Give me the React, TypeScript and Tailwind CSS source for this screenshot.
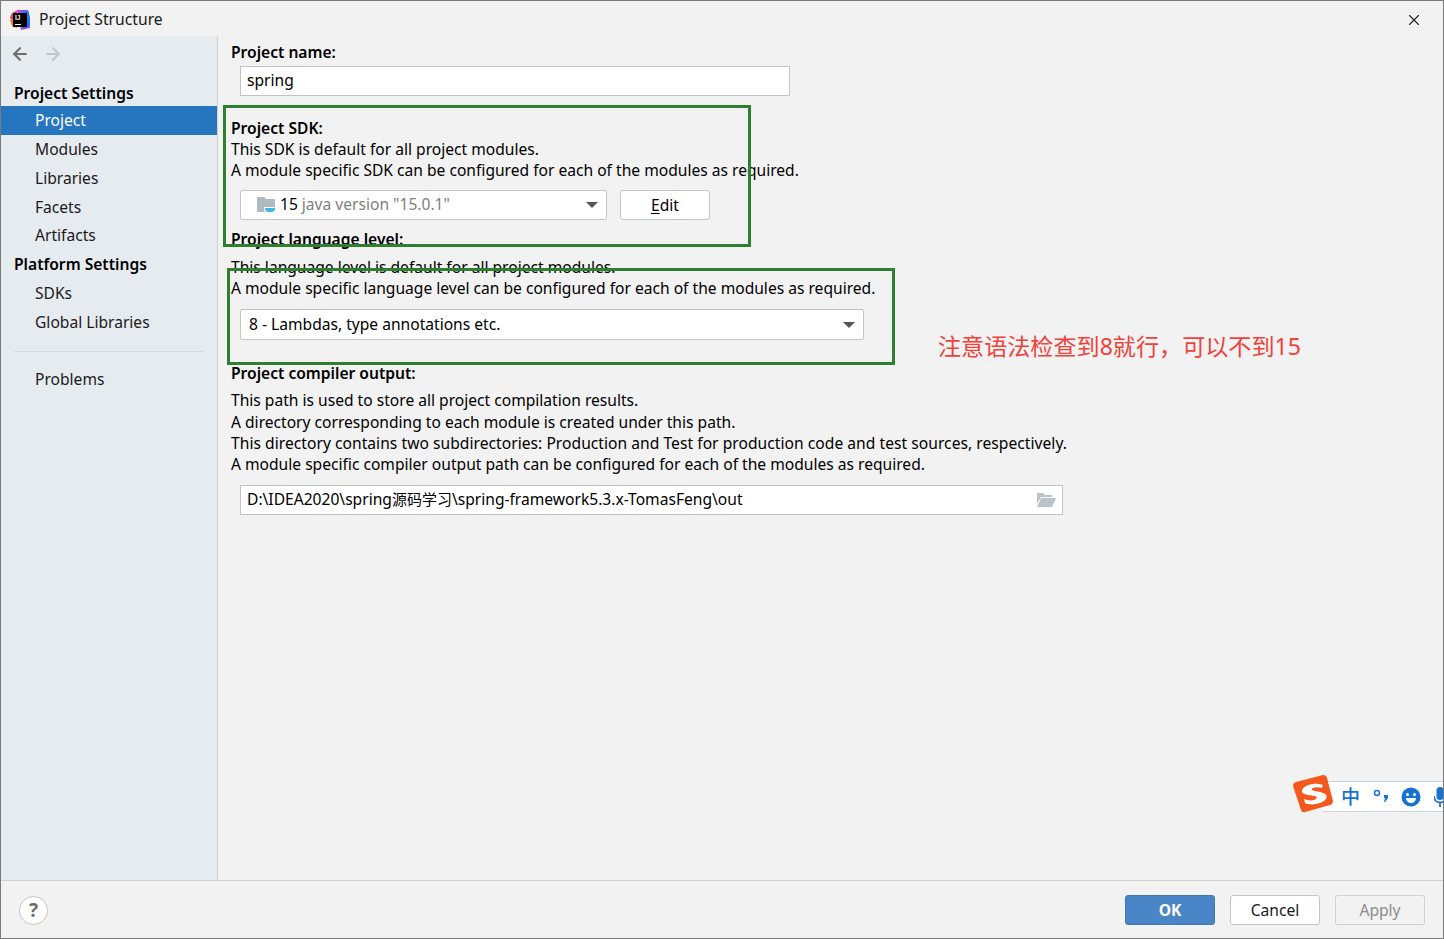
import React from 'react';
import { ArrowLeft, ArrowRight, X } from 'lucide-react';

const font = "font-['Noto_Sans','Noto_Sans_CJK_SC',sans-serif]";

const settingsItems = ['Modules', 'Libraries', 'Facets', 'Artifacts'];

function Caret() {
  return (
    <svg width="12" height="6" viewBox="0 0 12 6" className="shrink-0">
      <path d="M0 0h12L6 6z" fill="#555" />
    </svg>
  );
}

function IdeaLogo() {
  return (
    <svg width="22" height="22" viewBox="0 0 22 22">
      <path d="M3 4 9 1 4 12 1 9z" fill="#fe315d" />
      <path d="M1 11 6 9 8 19 3 17z" fill="#f97a12" />
      <path d="M8 1 19 1 21 9 21 19 12 21z" fill="#b345f1" />
      <path d="M14 1 20 3 21 17 14 20z" fill="#087cfa" />
      <rect x="4" y="4" width="14" height="14" fill="#000" />
      <text x="6" y="11" fontSize="6.5" fontWeight="700" fill="#fff" fontFamily="Liberation Sans">IJ</text>
      <rect x="6" y="15" width="6" height="1" fill="#fff" />
    </svg>
  );
}

function SdkFolder() {
  return (
    <svg width="20" height="20" viewBox="0 0 20 20">
      <path d="M0 2h7l2 2h9v13H0z" fill="#b0bac3" />
      <path d="M7 12h12v2c0 3-2 4-4 4h-4c-2 0-4-1-4-4z" fill="#fff" />
      <path d="M8 13h10v1c0 2-2 3-3.500 3h-3C10 17 8 16 8 14z" fill="#40b6e0" />
    </svg>
  );
}

function OpenFolder() {
  return (
    <svg width="20" height="16" viewBox="0 0 20 16">
      <path d="M1 1h6l2 2h7v2H5L1 12z" fill="#bcc4cb" />
      <path d="M5 6h15l-4 9H1z" fill="#bcc4cb" />
    </svg>
  );
}

function SogouBar() {
  return (
    <div className="absolute left-[1292px] top-[774px] h-[38px] w-[152px]">
      <div className="absolute left-[30px] top-[6px] h-[31px] w-[122px] border-y border-[#c3d3e6] bg-white" />
      <svg width="40" height="38" viewBox="0 0 40 38" className="absolute left-0 top-0">
        <path d="M3 7 30 0q3 0 4 3l6 23q0 3-3 4L12 37q-3 1-4-2L0 11q0-3 3-4z" fill="#f4581c" />
        <path d="M30 10C22 7 11 10 9 15c-1 5 7 5 13 6 3 1 2 3-1 4-4 1-7 0-10-1l1 4c6 3 17 1 21-4 3-5-4-7-11-8-4-1-4-2-2-3 3-1 6-1 9 0z" fill="#fff" />
      </svg>
      <span className="absolute left-[48px] top-[9px] text-[19px] leading-[26px] font-medium text-[#1673d2]">中</span>
      <svg width="20" height="18" viewBox="0 0 20 18" className="absolute left-[80px] top-[12px]">
        <circle cx="4" cy="6" r="2.500" fill="none" stroke="#1673d2" strokeWidth="1.500" />
        <path d="M11 8h4v3l-3 4h-1l1-4h-1z" fill="#1673d2" />
      </svg>
      <svg width="20" height="20" viewBox="0 0 20 20" className="absolute left-[108px] top-[12px]">
        <circle cx="10" cy="10" r="9.500" fill="#1673d2" />
        <circle cx="6.500" cy="7.500" r="1.500" fill="#fff" />
        <circle cx="13.500" cy="7.500" r="1.500" fill="#fff" />
        <path d="M5 11h10c0 3-2.500 5-5 5s-5-2-5-5z" fill="#fff" />
      </svg>
      <svg width="12" height="22" viewBox="0 0 12 22" className="absolute left-[141px] top-[12px]">
        <rect x="2.500" y="0" width="7" height="13" rx="3.500" fill="#1673d2" />
        <path d="M0 9c0 4 2.500 6.500 6 6.500s6-2.500 6-6.500M6 15.500V20" fill="none" stroke="#1673d2" strokeWidth="1.800" />
      </svg>
    </div>
  );
}

export default function App() {
  return (
    <div className={`${font} relative flex h-[939px] w-[1444px] flex-col overflow-hidden border border-[#7a7a7a] bg-[#f2f2f2] text-[15.600px] text-black`}>
      {/* Title bar */}
      <header className="flex h-[35px] shrink-0 items-center bg-[#f2f2f2] pl-[8px] pr-[20px] pt-[2px]">
        <IdeaLogo />
        <span className="ml-[8px] text-[15.700px] text-[#1a1a1a]">Project Structure</span>
        <X size={18} strokeWidth={1.500} className="ml-auto text-[#222]" />
      </header>

      <div className="flex min-h-0 flex-1">
        {/* Sidebar */}
        <aside className="flex w-[217px] shrink-0 flex-col border-r border-[#d1d1d1] bg-[#e6ebf0] leading-[28.800px]">
          <div className="flex h-[36px] items-center gap-[13px] pl-[9px]">
            <ArrowLeft size={20} strokeWidth={2.500} className="text-[#6e6e6e]" />
            <ArrowRight size={20} strokeWidth={2.500} className="text-[#c4c6c8]" />
          </div>
          <div className="mt-[7px] h-[27px] pl-[13px] font-semibold">Project Settings</div>
          <div className="h-[29px] bg-[#2675bf] pl-[34px] text-white">Project</div>
          {settingsItems.map((item) => (
            <div key={item} className="pl-[34px] text-[#1a1a1a]">{item}</div>
          ))}
          <div className="pl-[13px] font-semibold">Platform Settings</div>
          <div className="pl-[34px] text-[#1a1a1a]">SDKs</div>
          <div className="pl-[34px] text-[#1a1a1a]">Global Libraries</div>
          <div className="mx-[13px] mt-[14px] border-t border-[#d5dae0]" />
          <div className="mt-[13px] pl-[34px] text-[#1a1a1a]">Problems</div>
        </aside>

        {/* Main form */}
        <main className="min-w-0 flex-1 pl-[13px] pt-[6px] leading-[21px]">
          <div className="font-semibold">Project name:</div>
          <div className="ml-[9px] mt-[3px] flex h-[30px] w-[550px] items-center border border-[#c4c4c4] bg-white pb-[1px] pl-[6px]">spring</div>

          <div className="mt-[22px] font-semibold">Project SDK:</div>
          <div>This SDK is default for all project modules.</div>
          <div>A module specific SDK can be configured for each of the modules as required.</div>
          <div className="ml-[9px] mt-[9px] flex gap-[13px]">
            <div className="flex h-[30px] w-[367px] items-center rounded-[2px] border border-[#c4c4c4] bg-white pb-[1px] pl-[16px] pr-[8px]">
              <SdkFolder />
              <span className="ml-[3px]">15</span>
              <span className="ml-[4px] text-[#808080]">java version "15.0.1"</span>
              <span className="ml-auto"><Caret /></span>
            </div>
            <div className="flex h-[30px] w-[90px] items-center justify-center rounded-[3px] border border-[#c4c4c4] bg-white"><span className="underline underline-offset-2">E</span>dit</div>
          </div>

          <div className="mt-[9px] font-semibold">Project language level:</div>
          <div className="mt-[7px]">This language level is default for all project modules.</div>
          <div>A module specific language level can be configured for each of the modules as required.</div>
          <div className="ml-[9px] mt-[10px] flex h-[31px] w-[624px] items-center rounded-[2px] border border-[#c4c4c4] bg-white pl-[8px] pr-[8px]">
            8 - Lambdas, type annotations etc.
            <span className="ml-auto"><Caret /></span>
          </div>

          <div className="mt-[23px] font-semibold">Project compiler output:</div>
          <div className="mt-[6px]">This path is used to store all project compilation results.</div>
          <div className="mt-[1px]">A directory corresponding to each module is created under this path.</div>
          <div className="tracking-[0.04px]">This directory contains two subdirectories: Production and Test for production code and test sources, respectively.</div>
          <div>A module specific compiler output path can be configured for each of the modules as required.</div>
          <div className="ml-[9px] mt-[10px] flex h-[30px] w-[823px] items-center border border-[#c4c4c4] bg-white pb-[1px] pl-[6px] pr-[6px]">
            <span>D:\IDEA2020\spring<span className="text-[15px]">源码学习</span>\spring-framework5.3.x-TomasFeng\out</span>
            <span className="ml-auto"><OpenFolder /></span>
          </div>
        </main>
      </div>

      {/* Footer */}
      <footer className="flex h-[58px] shrink-0 items-center border-t border-[#d1d1d1] bg-[#f2f2f2] pl-[18px] pr-[18px] pt-[1px]">
        <div className="flex h-[29px] w-[29px] items-center justify-center rounded-full border border-[#c4c4c4] bg-white text-[19px] font-bold text-[#6e6e6e]">?</div>
        <button className="ml-auto h-[30px] w-[90px] rounded-[3px] border border-[#3f79b5] bg-[#4a86c7] pt-[1px] font-bold text-white">OK</button>
        <button className="ml-[15px] h-[30px] w-[90px] rounded-[3px] border border-[#c4c4c4] bg-white pt-[1px] text-[#1a1a1a]">Cancel</button>
        <button className="ml-[15px] h-[30px] w-[90px] rounded-[3px] border border-[#d1d1d1] bg-[#f2f2f2] pt-[1px] text-[#8c8c8c]">Apply</button>
      </footer>

      {/* Screenshot annotations */}
      <div className="pointer-events-none absolute left-[222px] top-[104px] h-[142px] w-[528px] border-[3px] border-[#2e8030]" />
      <div className="pointer-events-none absolute left-[226px] top-[267px] h-[97px] w-[668px] border-[3px] border-[#2e8030]" />
      <div className="absolute left-[937px] top-[328px] text-[23.100px] leading-[34px] text-[#f0413a]">注意语法检查到8就行，可以不到15</div>
      <SogouBar />
    </div>
  );
}
